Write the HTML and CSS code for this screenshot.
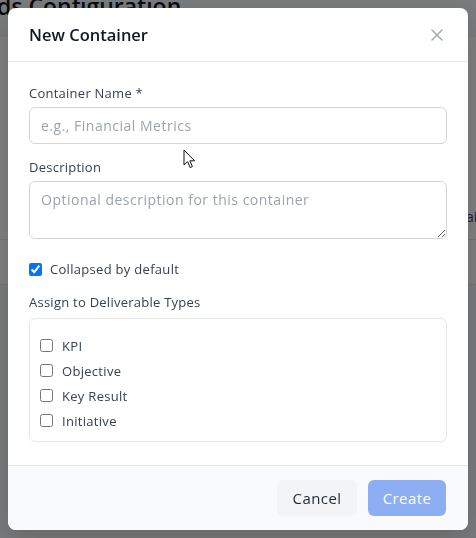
FILE: index.html
```html
<!DOCTYPE html>
<html lang="en">
<head>
<meta charset="utf-8">
<title>New Container</title>
<link rel="stylesheet" href="styles.css">
</head>
<body>
  <div class="page">
    <header class="page-header">
      <h1 class="page-title">ds Configuration</h1>
    </header>
    <section class="page-card">
      <div class="card-top"></div>
      <p class="card-text">ai</p>
      <div class="card-divider"></div>
    </section>
  </div>

  <div class="overlay">
    <div class="modal" role="dialog" aria-labelledby="modal-title">
      <div class="modal-header">
        <h2 class="modal-title" id="modal-title">New Container</h2>
        <button class="close-btn" aria-label="Close">
          <svg width="12" height="12" viewBox="0 0 12 12" fill="none" stroke="#9ca3af" stroke-width="1.4" stroke-linecap="round">
            <path d="M1 1L11 11M11 1L1 11"/>
          </svg>
        </button>
      </div>

      <div class="modal-body">
        <div class="field">
          <label class="label" for="name">Container Name *</label>
          <input class="input" id="name" type="text" placeholder="e.g., Financial Metrics">
        </div>
        <div class="field">
          <label class="label" for="desc">Description</label>
          <textarea class="textarea" id="desc" placeholder="Optional description for this container"></textarea>
        </div>
        <label class="check-row collapsed-row">
          <input type="checkbox" class="check" checked>
          <span>Collapsed by default</span>
        </label>
        <div class="label assign-label">Assign to Deliverable Types</div>
        <div class="types-box">
          <label class="check-row type-row"><input type="checkbox" class="check"><span>KPI</span></label>
          <label class="check-row type-row"><input type="checkbox" class="check"><span>Objective</span></label>
          <label class="check-row type-row"><input type="checkbox" class="check"><span>Key Result</span></label>
          <label class="check-row type-row"><input type="checkbox" class="check"><span>Initiative</span></label>
        </div>
      </div>

      <div class="modal-footer">
        <button class="btn btn-cancel">Cancel</button>
        <button class="btn btn-create" disabled>Create</button>
      </div>
    </div>
  </div>

  <svg class="cursor" width="14" height="21" viewBox="0 0 14 21" aria-hidden="true">
    <path d="M1 1 L1 16 L4.6 12.6 L7.2 18.6 L9.4 17.6 L6.9 11.8 L11.6 11.8 Z" fill="#ffffff" stroke="#111111" stroke-width="1" stroke-linejoin="round"/>
  </svg>
</body>
</html>
```

FILE: styles.css
```css
* { box-sizing: border-box; }

html, body {
  margin: 0;
  padding: 0;
}

body {
  width: 476px;
  height: 538px;
  overflow: hidden;
  font-family: "Open Sans", "Noto Sans", sans-serif;
  color: #374151;
}

/* background page */
.page {
  height: 538px;
  background: #f3f4f6;
}

.page-header {
  height: 37px;
  overflow: hidden;
}

.page-title {
  margin: -5px 0 0 -3px;
  font-size: 23px;
  line-height: 22px;
  font-weight: 600;
  color: #111827;
  white-space: nowrap;
}

.page-card {
  background: #ffffff;
  height: 248px;
  border-bottom: 1px solid #e5e7eb;
}

.card-top {
  height: 170px;
}

.card-text {
  margin: 0;
  padding-left: 466px;
  font-size: 14px;
  line-height: 20px;
  color: #374151;
  white-space: nowrap;
}

.card-divider {
  margin-top: 12px;
  border-top: 1px solid #e5e7eb;
}

/* overlay + modal */
.overlay {
  position: fixed;
  inset: 0;
  background: rgba(0, 0, 0, 0.5);
  padding: 8px;
}

.modal {
  height: 522px;
  background: #ffffff;
  border-radius: 8px;
  overflow: hidden;
  display: flex;
  flex-direction: column;
  box-shadow: 0 10px 25px rgba(0, 0, 0, 0.15);
}

.modal-header {
  height: 54px;
  flex: none;
  padding: 0 23px 0 21px;
  border-bottom: 1px solid #e5e7eb;
  display: flex;
  align-items: center;
  justify-content: space-between;
}

.modal-title {
  margin: 0;
  font-size: 16.5px;
  font-weight: 600;
  color: #111827;
}

.close-btn {
  width: 16px;
  height: 16px;
  padding: 0;
  border: 0;
  background: transparent;
  display: flex;
  align-items: center;
  justify-content: center;
  cursor: pointer;
}

.modal-body {
  flex: 1;
  padding: 21px 21px 0;
}

.field {
  margin-bottom: 13px;
}

.label {
  display: block;
  font-size: 13px;
  line-height: 20px;
  letter-spacing: 0.25px;
  color: #374151;
  margin-bottom: 4px;
}

.input,
.textarea {
  display: block;
  width: 100%;
  border: 1px solid #d1d5db;
  border-radius: 6px;
  font-family: inherit;
  font-size: 14px;
  letter-spacing: 0.5px;
  color: #111827;
  background: #fff;
  padding: 0 11px;
  outline: none;
}

.input {
  height: 37px;
}

.textarea {
  height: 58px;
  padding: 8px 11px;
  line-height: 20px;
  resize: vertical;
}

.input::placeholder,
.textarea::placeholder {
  color: #9ca3af;
}

.check-row {
  display: flex;
  align-items: center;
  gap: 8px;
  font-size: 13px;
  line-height: 20px;
  letter-spacing: 0.3px;
  color: #374151;
}

.check {
  margin: 0;
  width: 13px;
  height: 13px;
  flex: none;
}

.collapsed-row {
  margin-top: 20px;
  height: 20px;
}

.assign-label {
  margin-top: 13px;
  margin-bottom: 6px;
}

.types-box {
  border: 1px solid #e5e7eb;
  border-radius: 6px;
  padding: 14px 10px 8px;
}

.type-row {
  height: 25px;
  gap: 9px;
}

.modal-footer {
  flex: none;
  height: 65px;
  background: #f9fafb;
  border-top: 1px solid #e5e7eb;
  padding: 0 22px 0 21px;
  display: flex;
  align-items: center;
  justify-content: flex-end;
  gap: 11px;
}

.btn {
  height: 36px;
  border: 0;
  border-radius: 6px;
  font-family: inherit;
  font-size: 15px;
  letter-spacing: 0.4px;
  padding: 0;
}

.btn-cancel {
  width: 80px;
  background: #f3f4f6;
  color: #1f2937;
}

.btn-create {
  width: 78px;
  background: #2563eb;
  opacity: 0.5;
  color: #ffffff;
}

/* mouse pointer captured in the screenshot */
.cursor {
  position: absolute;
  left: 183px;
  top: 149px;
}
```
